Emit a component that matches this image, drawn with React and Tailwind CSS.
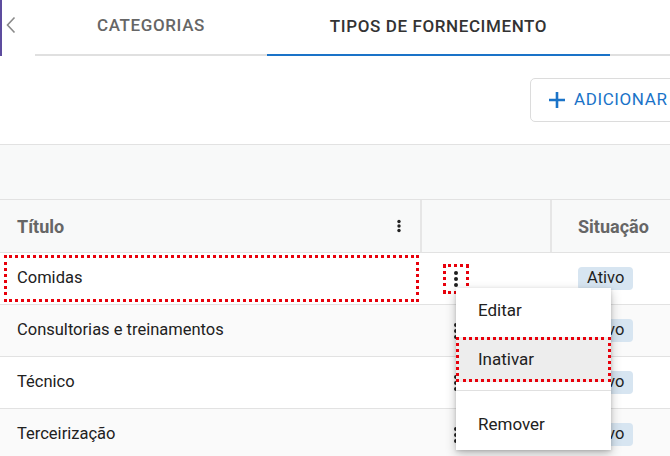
import React from "react";

function Kebab({ size = "sm" }) {
  if (size === "sm") {
    return (
      <svg width="6" height="14" viewBox="0 0 6 14" className="block">
        <circle cx="3" cy="2.5" r="1.7" fill="#222" />
        <circle cx="3" cy="7" r="1.7" fill="#222" />
        <circle cx="3" cy="11.5" r="1.7" fill="#222" />
      </svg>
    );
  }
  return (
    <svg width="8" height="18" viewBox="0 0 8 18" className="block">
      <circle cx="4" cy="3" r="2" fill="#1f1f1f" />
      <circle cx="4" cy="9" r="2" fill="#1f1f1f" />
      <circle cx="4" cy="15" r="2" fill="#1f1f1f" />
    </svg>
  );
}

function Chip() {
  return (
    <span className="inline-flex h-[23px] items-center rounded-[4px] bg-[#d7e5f1] px-[9px] text-[16.5px] text-[#1f1f1f]">
      Ativo
    </span>
  );
}

const rows = [
  { t: "Comidas", bg: "bg-white", sel: true },
  { t: "Consultorias e treinamentos", bg: "bg-[#fafafa]" },
  { t: "Técnico", bg: "bg-white" },
  { t: "Terceirização", bg: "bg-[#fafafa]" },
];

export default function App() {
  return (
    <div
      className="relative h-[456px] w-[670px] overflow-hidden bg-white"
      style={{ fontFamily: "Roboto, 'Liberation Sans', sans-serif" }}
    >
      <div className="w-[720px]">
        {/* Tabs */}
        <div className="flex h-[56px]">
          <div className="h-[56px] w-[2px] bg-[#5d4c9e]" />
          <div className="flex w-[33px] items-start pl-[3px] pt-[16px]">
            <svg width="12" height="18" viewBox="0 0 12 18">
              <polyline points="9.5,1.5 2.5,9 9.5,16.5" fill="none" stroke="#8a8a8a" strokeWidth="1.6" />
            </svg>
          </div>
          <div className="flex flex-1 border-b-[2px] border-[#e0e0e0]">
            <div className="flex w-[232px] items-center justify-center pb-[3px] text-[17px] font-medium tracking-[0.6px] text-[#666]">
              CATEGORIAS
            </div>
            <div className="mb-[-2px] flex w-[343px] items-center justify-center border-b-[2px] border-[#1a73c8] pb-[1px] text-[17px] font-medium tracking-[0.6px] text-[#333]">
              TIPOS DE FORNECIMENTO
            </div>
          </div>
        </div>

        {/* Button area */}
        <div className="flex h-[88px] items-start pl-[530px] pt-[22px]">
          <button className="flex h-[44px] items-center gap-[8px] rounded-[5px] border border-[#dcdcdc] bg-white pl-[17px] pr-[16px] text-[17px] tracking-[0.6px] text-[#1a73c8]">
            <svg width="18" height="18" viewBox="0 0 18 18">
              <path d="M9 1v16M1 9h16" stroke="#1a73c8" strokeWidth="2.6" />
            </svg>
            <span>ADICIONAR</span>
          </button>
        </div>

        {/* Toolbar strip */}
        <div className="h-[56px] border-y border-[#e2e2e2] bg-[#f8f9f9]" />

        {/* Header */}
        <div className="flex h-[53px] border-b border-[#e2e2e2] bg-[#f8f9f9] text-[18px] font-bold text-[#666]">
          <div className="flex w-[420px] items-center justify-between pl-[17px] pr-[18px]">
            <span>Título</span>
            <Kebab />
          </div>
          <div className="w-[130px] border-l-[2px] border-[#e6e6e6]" />
          <div className="flex flex-1 items-center border-l-[2px] border-[#e6e6e6] pl-[26px]">
            Situação
          </div>
        </div>

        {/* Rows */}
        {rows.map((r) => (
          <div key={r.t} className={`flex h-[52px] border-b border-[#e2e2e2] ${r.bg} text-[16.5px] text-[#212121]`}>
            {r.sel ? (
              <div className="flex w-[420px] py-[2px] pl-[4px] pr-[1px]">
                <div className="flex flex-1 items-center border-[3px] border-dotted border-[#e8000b] pl-[10px]">
                  {r.t}
                </div>
              </div>
            ) : (
              <div className="flex w-[420px] items-center pl-[17px]">{r.t}</div>
            )}
            <div className="flex w-[132px] items-center pl-[23px]">
              {r.sel ? (
                <div className="flex h-[30px] w-[26px] items-center justify-center border-[3px] border-dotted border-[#e8000b]">
                  <Kebab size="lg" />
                </div>
              ) : (
                <div className="flex h-[30px] w-[26px] items-center justify-center">
                  <Kebab size="lg" />
                </div>
              )}
            </div>
            <div className="flex flex-1 items-center pl-[26px]">
              <Chip />
            </div>
          </div>
        ))}
      </div>

      {/* Menu */}
      <div className="absolute left-[456px] top-[288px] w-[155px] bg-white text-[17px] text-[#212121] shadow-[0_4px_10px_rgba(0,0,0,0.25),0_1px_3px_rgba(0,0,0,0.15)]">
        <div className="flex h-[49px] items-center pb-[3px] pl-[22px]">Editar</div>
        <div className="flex h-[45px] items-center border-[3px] border-dotted border-[#e8000b] bg-[#ededed] pl-[19px]">
          Inativar
        </div>
        <div className="my-[8px] h-px bg-[#e0e0e0]" />
        <div className="flex h-[51px] items-center pl-[22px]">Remover</div>
      </div>
    </div>
  );
}
